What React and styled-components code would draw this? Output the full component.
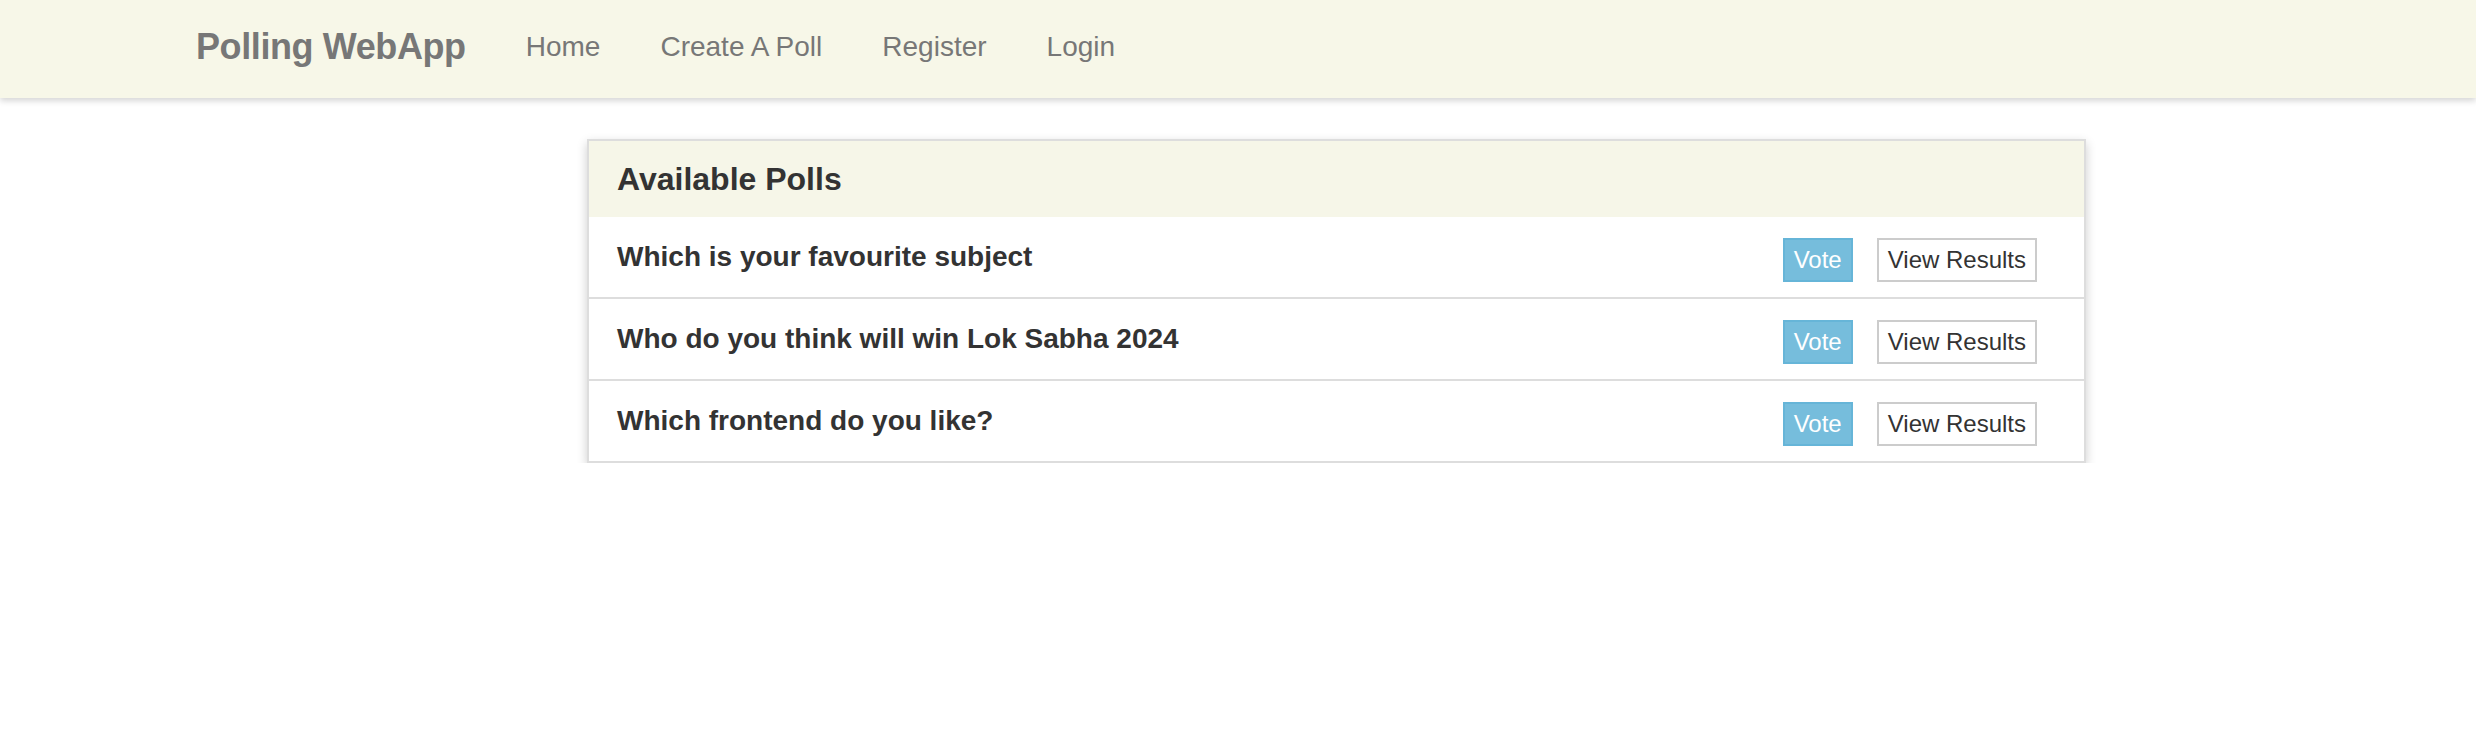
import React from 'react';
import styled, { createGlobalStyle } from 'styled-components';

const GlobalStyle = createGlobalStyle`
  *, *::before, *::after {
    box-sizing: border-box;
  }
  body {
    margin: 0;
    background: #fff;
    font-family: "Liberation Sans", Arial, sans-serif;
    color: #333;
  }
`;

const NavBar = styled.nav`
  display: flex;
  align-items: center;
  height: 98px;
  padding: 0 0 4px 166px;
  background-color: #f7f7e8;
  box-shadow: 0 3px 6px rgba(0, 0, 0, 0.16);
`;

const Brand = styled.a`
  padding: 0 30px;
  font-size: 36px;
  font-weight: bold;
  letter-spacing: -0.4px;
  color: #777;
  text-decoration: none;
`;

const NavLink = styled.a`
  padding: 0 30px;
  font-size: 28px;
  color: #777;
  text-decoration: none;
`;

const Main = styled.main`
  padding: 41px 0 0 587px;
`;

const Panel = styled.section`
  width: 1499px;
  border: 2px solid #ddd;
  box-shadow: 0 4px 10px rgba(0, 0, 0, 0.2);
  background: #fff;
`;

const PanelHeading = styled.div`
  display: flex;
  align-items: center;
  height: 76px;
  padding: 0 28px;
  background-color: #f6f6e8;
`;

const PanelTitle = styled.h3`
  margin: 0;
  font-size: 32px;
  font-weight: bold;
  color: #333;
`;

const PollRow = styled.div`
  display: flex;
  align-items: center;
  justify-content: space-between;
  height: ${(p) => (p.$first ? '80px' : '82px')};
  padding: 0 47px 0 28px;
  border-top: ${(p) => (p.$first ? 'none' : '2px solid #ddd')};
`;

const Question = styled.span`
  font-size: 28px;
  font-weight: bold;
  color: #333;
`;

const Actions = styled.div`
  display: flex;
  align-items: center;
  gap: 24px;
  margin-top: 6px;
`;

const Button = styled.button`
  height: 44px;
  padding: 0 9px;
  font-family: "Liberation Sans", Arial, sans-serif;
  font-size: 24px;
  border: 2px solid ${(p) => (p.$primary ? '#66b5d8' : '#ccc')};
  background-color: ${(p) => (p.$primary ? '#76bddc' : '#fff')};
  color: ${(p) => (p.$primary ? '#fff' : '#333')};
  border-radius: 0;
  cursor: pointer;
`;

const polls = [
  'Which is your favourite subject',
  'Who do you think will win Lok Sabha 2024',
  'Which frontend do you like?',
];

export default function App() {
  return (
    <>
      <GlobalStyle />
      <NavBar>
        <Brand href="#">Polling WebApp</Brand>
        <NavLink href="#">Home</NavLink>
        <NavLink href="#">Create A Poll</NavLink>
        <NavLink href="#">Register</NavLink>
        <NavLink href="#">Login</NavLink>
      </NavBar>
      <Main>
        <Panel>
          <PanelHeading>
            <PanelTitle>Available Polls</PanelTitle>
          </PanelHeading>
          {polls.map((q, i) => (
            <PollRow key={q} $first={i === 0}>
              <Question>{q}</Question>
              <Actions>
                <Button $primary>Vote</Button>
                <Button>View Results</Button>
              </Actions>
            </PollRow>
          ))}
        </Panel>
      </Main>
    </>
  );
}
